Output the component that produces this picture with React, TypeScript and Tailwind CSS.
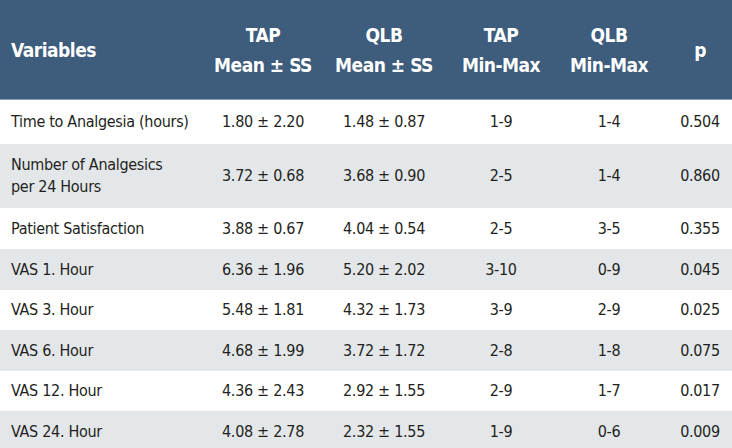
const rows = [
  { v: ["Time to Analgesia (hours)"], a: "1.80 ± 2.20", b: "1.48 ± 0.87", c: "1-9", d: "1-4", p: "0.504", h: "h-[44px]" },
  { v: ["Number of Analgesics", "per 24 Hours"], a: "3.72 ± 0.68", b: "3.68 ± 0.90", c: "2-5", d: "1-4", p: "0.860", h: "h-[64px]" },
  { v: ["Patient Satisfaction"], a: "3.88 ± 0.67", b: "4.04 ± 0.54", c: "2-5", d: "3-5", p: "0.355", h: "h-[41px]" },
  { v: ["VAS 1. Hour"], a: "6.36 ± 1.96", b: "5.20 ± 2.02", c: "3-10", d: "0-9", p: "0.045", h: "h-[41px]" },
  { v: ["VAS 3. Hour"], a: "5.48 ± 1.81", b: "4.32 ± 1.73", c: "3-9", d: "2-9", p: "0.025", h: "h-[40px]" },
  { v: ["VAS 6. Hour"], a: "4.68 ± 1.99", b: "3.72 ± 1.72", c: "2-8", d: "1-8", p: "0.075", h: "h-[41px]" },
  { v: ["VAS 12. Hour"], a: "4.36 ± 2.43", b: "2.92 ± 1.55", c: "2-9", d: "1-7", p: "0.017", h: "h-[40px]" },
  { v: ["VAS 24. Hour"], a: "4.08 ± 2.78", b: "2.32 ± 1.55", c: "1-9", d: "0-6", p: "0.009", h: "h-[41px]" },
];

const cols = "grid grid-cols-[210px_106px_136px_98px_118px_64px]";

const App = () => {
  return (
    <div className="w-[732px] h-[448px] overflow-hidden bg-white text-[#231f20] font-['DejaVu_Sans_Condensed',sans-serif]">
      <div className={`${cols} h-[100px] bg-[#3e5c7b] text-white font-bold text-[19px] leading-[30px] tracking-[-0.5px] items-center border-b border-[#8a9db0]`}>
        <div className="pl-[11px]">Variables</div>
        <div className="text-center">TAP<br />Mean ± SS</div>
        <div className="text-center">QLB<br />Mean ± SS</div>
        <div className="text-center">TAP<br />Min-Max</div>
        <div className="text-center">QLB<br />Min-Max</div>
        <div className="text-center">p</div>
      </div>
      {rows.map((r, i) => (
        <div
          key={i}
          className={`${cols} ${r.h} items-center text-[16px] leading-[22px] tracking-[-0.3px] ${i % 2 === 1 ? "bg-[#e3e7ea]" : "bg-white"}`}
        >
          <div className="pl-[11px]">
            {r.v.map((t) => (
              <div key={t}>{t}</div>
            ))}
          </div>
          <div className="text-center">{r.a}</div>
          <div className="text-center">{r.b}</div>
          <div className="text-center">{r.c}</div>
          <div className="text-center">{r.d}</div>
          <div className="text-center">{r.p}</div>
        </div>
      ))}
    </div>
  );
};

export default App;
